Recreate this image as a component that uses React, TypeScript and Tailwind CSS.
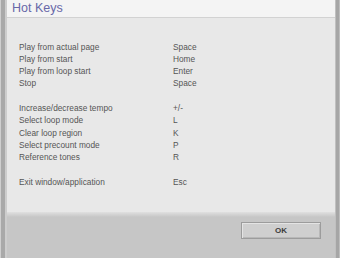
const groups = [
  [
    ["Play from actual page", "Space"],
    ["Play from start", "Home"],
    ["Play from loop start", "Enter"],
    ["Stop", "Space"],
  ],
  [
    ["Increase/decrease tempo", "+/-"],
    ["Select loop mode", "L"],
    ["Clear loop region", "K"],
    ["Select precount mode", "P"],
    ["Reference tones", "R"],
  ],
  [["Exit window/application", "Esc"]],
];

export default function App() {
  return (
    <div className="flex h-[258px] w-[340px] bg-[#c6c6c6] font-['Liberation_Sans',Arial,sans-serif]">
      {/* left frame */}
      <div className="flex h-full w-[7px] shrink-0">
        <div className="w-[1px] bg-[#cfcfcf]" />
        <div className="w-[4px] bg-[#a9a9a9]" />
        <div className="w-[2px] bg-[#cdcdcd]" />
      </div>

      <div className="flex min-w-0 flex-1 flex-col">
        <div className="flex h-[18px] shrink-0 items-center border-b border-[#d2d2d2] bg-[#f4f4f4] pl-[5px]">
          <span className="text-[12.5px] leading-none text-[#6868a8]">Hot Keys</span>
        </div>

        <div className="flex flex-1 flex-col gap-[12.5px] bg-[#e8e8e8] pl-[12px] pt-[22.5px] text-[8.3px] leading-[12.3px] text-[#555]">
          {groups.map((rows, i) => (
            <div key={i} className="flex flex-col">
              {rows.map(([label, key]) => (
                <div key={label} className="flex">
                  <span className="w-[154px] shrink-0">{label}</span>
                  <span>{key}</span>
                </div>
              ))}
            </div>
          ))}
        </div>

        <div className="h-[5px] shrink-0 bg-gradient-to-b from-[#e0e0e0] to-[#c6c6c6]" />
        <div className="flex h-[41px] shrink-0 items-start justify-end bg-[#c6c6c6] pr-[14px] pt-[5px]">
          <button className="flex h-[17px] w-[80px] items-center justify-center border border-[#9c9c9c] bg-[#cfcfcf] shadow-[inset_1px_1px_0_#e4e4e4,inset_-1px_-1px_0_#b8b8b8] text-[8px] font-bold text-[#3c3c3c]">
            OK
          </button>
        </div>
      </div>

      {/* right frame */}
      <div className="flex h-full w-[5px] shrink-0">
        <div className="w-[1px] bg-[#c0c0c0]" />
        <div className="w-[3px] bg-[#a6a6a6]" />
        <div className="w-[1px] bg-[#bdbdbd]" />
      </div>
    </div>
  );
}
